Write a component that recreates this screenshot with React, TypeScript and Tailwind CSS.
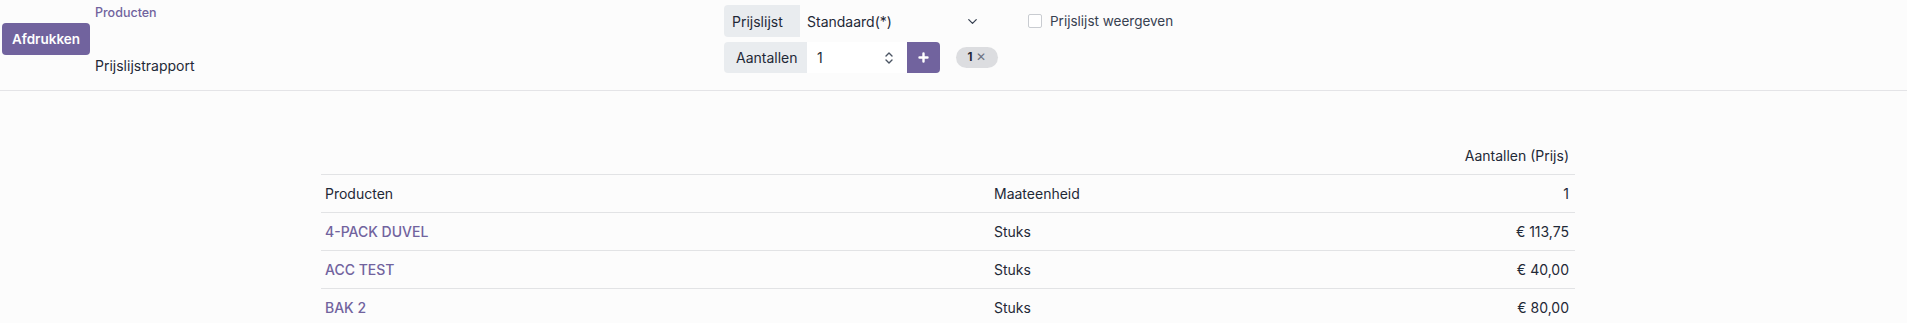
import { ChevronDown } from "lucide-react";

const rows = [
  { name: "4-PACK DUVEL", uom: "Stuks", price: "€ 113,75" },
  { name: "ACC TEST", uom: "Stuks", price: "€ 40,00" },
  { name: "BAK 2", uom: "Stuks", price: "€ 80,00" },
];

function Spinner() {
  return (
    <svg width="10" height="16" viewBox="0 0 10 16" fill="none" stroke="#4b5563" strokeWidth="1.4" strokeLinecap="round" strokeLinejoin="round">
      <path d="M2 6l3-3 3 3" />
      <path d="M2 10l3 3 3-3" />
    </svg>
  );
}

export default function App() {
  return (
    <div className="min-h-[323px] bg-[#fcfcfc] text-[14px] text-[#374151]" style={{ fontFamily: "Inter, 'Noto Sans', sans-serif" }}>
      {/* control panel */}
      <div className="flex h-[91px] items-start border-b border-[#e4e4e7]">
        <div className="flex w-[724px] shrink-0 items-start">
          <button className="ml-[2px] mt-[23px] h-8 w-[88px] rounded-[4px] bg-[#71639e] text-[13.5px] font-semibold text-white">
            Afdrukken
          </button>
          <div className="ml-[5px] flex h-[76px] flex-col justify-between pt-[4px]">
            <span className="text-[12.5px] font-medium leading-[18px] text-[#71639e]">Producten</span>
            <span className="text-[14px] leading-[20px] text-[#1f2937]">Prijslijstrapport</span>
          </div>
        </div>

        <div className="mt-[5px] flex flex-col gap-[5px]">
          <div className="flex items-center">
            <div className="flex h-8 items-center">
              <span className="flex h-8 w-[76px] items-center rounded-l-[4px] bg-[#e9ecef] pl-2 text-[#1f2937]">Prijslijst</span>
              <div className="flex h-8 w-[190px] items-center justify-between pl-[7px] pr-[10px] text-[#1f2937]">
                <span>Standaard(*)</span>
                <ChevronDown size={15} strokeWidth={2} className="text-[#374151]" />
              </div>
            </div>
            <label className="ml-[38px] flex items-center gap-[8px] text-[13.5px] text-[#374151]">
              <span className="h-[14px] w-[14px] rounded-[2px] border border-[#c9ccd1] bg-white" />
              <span>Prijslijst weergeven</span>
            </label>
          </div>

          <div className="flex items-center">
            <div className="flex h-[31px] items-stretch">
              <span className="flex w-[83px] items-center rounded-l-[4px] bg-[#e9ecef] pl-3 text-[#1f2937]">Aantallen</span>
              <div className="flex w-[100px] items-center justify-between bg-white pl-[10px] pr-[13px] text-[#1f2937]">
                <span>1</span>
                <Spinner />
              </div>
              <button className="flex w-[33px] items-center justify-center rounded-r-[4px] bg-[#71639e]">
                <svg width="11" height="11" viewBox="0 0 11 11" stroke="white" strokeWidth="2.4" strokeLinecap="round">
                  <path d="M5.5 1.5v8M1.5 5.5h8" />
                </svg>
              </button>
            </div>
            <span className="ml-4 flex h-[21px] w-[42px] items-center justify-center gap-[4px] rounded-full bg-[#dcdde0] text-[11.5px]">
              <span className="font-bold text-[#1f2937]">1</span>
              <span className="text-[#6b7280]">✕</span>
            </span>
          </div>
        </div>
      </div>

      {/* report */}
      <div className="ml-[321px] mt-[46px] w-[1254px]">
        <table className="w-full border-collapse">
          <thead>
            <tr className="h-[37px]">
              <th className="w-[669px]" />
              <th className="w-[300px]" />
              <th className="px-1 pr-[6px] text-right font-normal text-[#1f2937]">Aantallen (Prijs)</th>
            </tr>
            <tr className="h-[38px] border-t border-[#e2e3e5]">
              <th className="px-1 text-left font-normal text-[#1f2937]">Producten</th>
              <th className="px-1 text-left font-normal text-[#1f2937]">Maateenheid</th>
              <th className="px-1 pr-[6px] text-right font-normal text-[#1f2937]">1</th>
            </tr>
          </thead>
          <tbody>
            {rows.map((r) => (
              <tr key={r.name} className="h-[38px] border-t border-[#e2e3e5]">
                <td className="px-1 font-medium text-[#71639e]">{r.name}</td>
                <td className="px-1 text-[#1f2937]">{r.uom}</td>
                <td className="px-1 pr-[6px] text-right text-[#1f2937]">{r.price}</td>
              </tr>
            ))}
          </tbody>
        </table>
      </div>
    </div>
  );
}
